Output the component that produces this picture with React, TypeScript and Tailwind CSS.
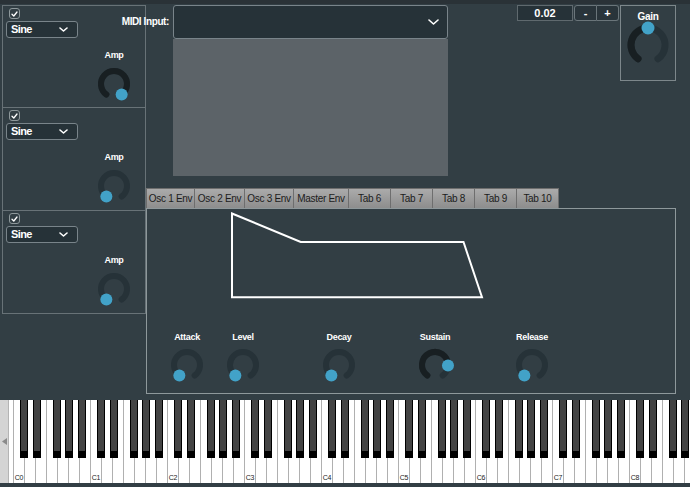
import React from 'react';

const FONT = "font-['Liberation_Sans',Arial,sans-serif]";

// rotary knob: 216deg -> 504deg clockwise from 12 o'clock
function Knob({ size, r, sw, thumb, value }: { size: number; r: number; sw: number; thumb: number; value: number }) {
  const c = size / 2;
  const pt = (deg: number) => {
    const a = (deg * Math.PI) / 180;
    return [c + r * Math.sin(a), c - r * Math.cos(a)];
  };
  const arc = (a0: number, a1: number) => {
    const [x0, y0] = pt(a0);
    const [x1, y1] = pt(a1);
    const large = a1 - a0 > 180 ? 1 : 0;
    return `M ${x0} ${y0} A ${r} ${r} 0 ${large} 1 ${x1} ${y1}`;
  };
  const start = 216;
  const cur = start + value * 288;
  const [tx, ty] = pt(cur);
  return (
    <svg width={size} height={size} className="block">
      <path d={arc(start, 504)} stroke="#263238" strokeWidth={sw} fill="none" strokeLinecap="round" />
      {value > 0 && <path d={arc(start, cur)} stroke="#181f22" strokeWidth={sw} fill="none" strokeLinecap="round" />}
      <circle cx={tx} cy={ty} r={thumb} fill="#42a2c8" />
    </svg>
  );
}

function Chevron({ w, h }: { w: number; h: number }) {
  return (
    <svg width={w} height={h} viewBox={`0 0 ${w} ${h}`} className="block">
      <path d={`M1 1 L${w / 2} ${h - 1} L${w - 1} 1`} stroke="white" strokeWidth={1.6} fill="none" strokeLinecap="round" strokeLinejoin="round" />
    </svg>
  );
}

function OscPanel({ first, amp }: { first?: boolean; amp: number }) {
  return (
    <div className={`flex h-[103px] flex-col border-b border-[#687277] ${first ? 'border-t' : ''}`}>
      <div className="ml-[6px] mt-[2px] flex h-[11px] w-[11px] items-center justify-center rounded-[3px] border border-[#8e989b]">
        <svg width="7" height="6" viewBox="0 0 7 6" className="block">
          <path d="M1 3.2 L2.8 5 L6 1" stroke="white" strokeWidth="1.3" fill="none" strokeLinecap="round" strokeLinejoin="round" />
        </svg>
      </div>
      <div className="ml-[3px] mt-[2px] flex h-[17px] w-[72px] items-center justify-between rounded-[3px] border border-[#79848a] bg-[#263238] pl-[4px] pr-[9px]">
        <span className="text-[11px] font-bold leading-none tracking-[-0.6px] text-white">Sine</span>
        <Chevron w={9} h={5} />
      </div>
      <div className="mr-[11px] mt-[11px] flex w-[40px] flex-col items-center self-end">
        <span className="h-[12px] text-[9px] font-bold leading-[12px] tracking-[-0.3px] text-white">Amp</span>
        <div className="mt-[3px]">
          <Knob size={40} r={13} sw={6} thumb={6} value={amp} />
        </div>
      </div>
    </div>
  );
}

const tabs = [
  { label: 'Osc 1 Env', w: 49 },
  { label: 'Osc 2 Env', w: 50 },
  { label: 'Osc 3 Env', w: 49 },
  { label: 'Master Env', w: 55 },
  { label: 'Tab 6', w: 42 },
  { label: 'Tab 7', w: 42 },
  { label: 'Tab 8', w: 42 },
  { label: 'Tab 9', w: 42 },
  { label: 'Tab 10', w: 42 },
];

const envKnobs = [
  { label: 'Attack', ml: 20, value: 0 },
  { label: 'Level', ml: 16, value: 0 },
  { label: 'Decay', ml: 56, value: 0 },
  { label: 'Sustain', ml: 56, value: 0.82 },
  { label: 'Release', ml: 57, value: 0 },
];

const KEY_W = 11;
const KEY_START = 14;
const BLACK_POS = [0.58, 1.72, 3.51, 4.65, 5.79];

function Keyboard() {
  const whites = Array.from({ length: 62 }, (_, i) => i);
  const blacks: number[] = [];
  for (let o = 0; o < 9; o++) {
    for (const p of BLACK_POS) {
      const left = KEY_START + (o * 7 + p) * KEY_W;
      if (left < 690) blacks.push(left);
    }
  }
  return (
    <div className="relative mt-[6px] flex h-[83px] overflow-hidden">
      <div className="flex h-full w-[9px] flex-none items-center justify-center border-r border-[#b4b4b4] bg-[#d4d4d4]">
        <svg width="5" height="7" viewBox="0 0 5 7" className="block">
          <path d="M0 3.5 L5 0 L5 7 Z" fill="#8a8a8a" />
        </svg>
      </div>
      <div className="h-full w-[5px] flex-none border-r border-[#b0b0b0] bg-white" />
      {whites.map((i) => (
        <div key={i} className="relative h-full w-[11px] flex-none border-r border-[#b0b0b0] bg-white">
          {i % 7 === 0 && (
            <span className="absolute bottom-[2px] left-0 w-full text-center text-[7px] leading-none tracking-[-0.3px] text-[#222]">
              {`C${i / 7}`}
            </span>
          )}
        </div>
      ))}
      {blacks.map((left) => (
        <div key={left} className="absolute top-0 h-[58px] w-[8px] bg-black" style={{ left }}>
          <div className="mx-[1px] h-[51px] bg-[#434343]" />
        </div>
      ))}
    </div>
  );
}

export default function App() {
  return (
    <div className={`flex h-[487px] w-[690px] flex-col overflow-hidden bg-[#323e44] ${FONT}`}>
      <div className="h-[4px] bg-[#2a3237]" />

      <div className="flex">
        {/* oscillators */}
        <div className="ml-[2px] mt-[1px] flex w-[144px] flex-col self-start border-x border-[#687277]">
          <OscPanel first amp={1} />
          <OscPanel amp={0} />
          <OscPanel amp={0} />
        </div>

        <div className="flex w-[530px] flex-col">
          {/* top row */}
          <div className="mt-[1px] flex h-[183px] items-start">
            <div className="relative ml-[27px] flex w-[275px] flex-col">
              <span className="absolute right-full top-[10px] mr-[4px] whitespace-nowrap text-[10px] font-bold leading-[14px] tracking-[-0.4px] text-white">
                MIDI Input:
              </span>
              <div className="flex h-[34px] items-center justify-end rounded-[3px] border border-[#79848a] bg-[#263238] pr-[8px]">
                <Chevron w={11} h={6} />
              </div>
              <div className="h-[137px] bg-[#5c6368]" />
            </div>

            <div className="ml-[69px] flex h-[16px] w-[56px] items-center justify-center border border-[#5f696e] bg-[#263238]">
              <span className="text-[11px] font-bold leading-none text-white">0.02</span>
            </div>
            <div className="ml-[1px] flex h-[16px] w-[23px] items-center justify-center rounded-l-[3px] border border-[#6a757a] bg-[#29343a]">
              <span className="text-[11px] font-bold leading-none text-white">-</span>
            </div>
            <div className="flex h-[16px] w-[22px] items-center justify-center rounded-r-[3px] border border-l-0 border-[#6a757a] bg-[#29343a]">
              <span className="text-[11px] font-bold leading-none text-white">+</span>
            </div>

            <div className="ml-[1px] flex h-[76px] w-[56px] flex-col items-center border border-[#7d878b]">
              <span className="mt-[5px] h-[12px] text-[10px] font-bold leading-[12px] tracking-[-0.3px] text-white">Gain</span>
              <div className="-mt-[3px]">
                <Knob size={50} r={17} sw={7} thumb={6.5} value={0.5} />
              </div>
            </div>
          </div>

          {/* tabs */}
          <div className="flex h-[20px]">
            {tabs.map((t, i) => (
              <div
                key={t.label}
                className={`flex h-full flex-none items-center justify-center border-t border-r border-[#6e6e6e] bg-linear-to-b from-[#ababab] to-[#8d8d8d] ${i === 0 ? 'border-l' : ''}`}
                style={{ width: t.w }}
              >
                <span className="whitespace-nowrap text-[10px] leading-none tracking-[-0.3px] text-[#1c1c1c]">{t.label}</span>
              </div>
            ))}
          </div>

          {/* envelope panel */}
          <div className="flex h-[186px] flex-col border border-[#8e989b]">
            <svg width="528" height="122" className="block flex-none">
              <polygon points="85,4.5 153.7,33 316.5,33 335,88.3 85,88.3" fill="none" stroke="white" strokeWidth="2" strokeLinejoin="miter" />
            </svg>
            <div className="flex">
              {envKnobs.map((k) => (
                <div key={k.label} className="flex w-[40px] flex-none flex-col items-center" style={{ marginLeft: k.ml }}>
                  <span className="h-[12px] whitespace-nowrap text-[9px] font-bold leading-[12px] tracking-[-0.3px] text-white">{k.label}</span>
                  <div className="mt-[2px]">
                    <Knob size={40} r={13} sw={6} thumb={6} value={k.value} />
                  </div>
                </div>
              ))}
            </div>
          </div>
        </div>
      </div>

      <Keyboard />
    </div>
  );
}
